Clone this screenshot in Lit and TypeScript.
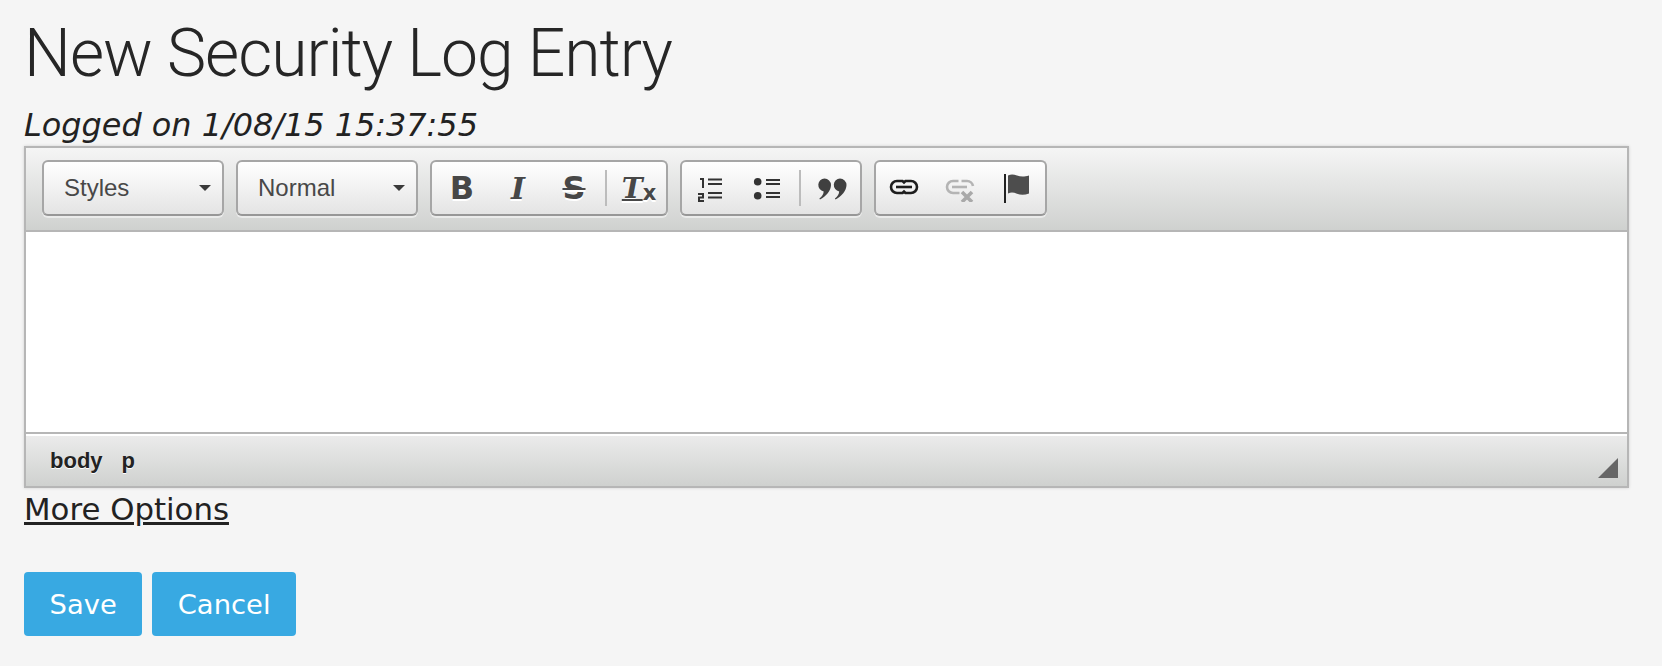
import { LitElement, html, css, svg } from "lit";
import { customElement } from "lit/decorators.js";

const listNum = svg`<svg class="ic nudge2" width="28" height="28" viewBox="0 0 28 28"><g fill="#333"><path d="M4 4h4v10H6V6H4z"/><path d="M2 19h6v5.500H4V26h4v2H2v-5.500h4V21H2z"/><rect x="12" y="4.500" width="14" height="2"/><rect x="12" y="9" width="14" height="2"/><rect x="12" y="18" width="14" height="2"/><rect x="12" y="22.500" width="14" height="2"/></g></svg>`;
const listBul = svg`<svg class="ic nudge1" width="28" height="28" viewBox="0 0 28 28"><g fill="#333"><circle cx="4.700" cy="7.700" r="3.800"/><circle cx="4.700" cy="21.700" r="3.800"/><rect x="13" y="5" width="14" height="2"/><rect x="13" y="9" width="14" height="2"/><rect x="13" y="18" width="14" height="2"/><rect x="13" y="22" width="14" height="2"/></g></svg>`;
const quote = svg`<svg class="ic" width="32" height="28" viewBox="0 0 32 28"><g fill="#404040"><path d="M8.500 4.500a6.500 6.500 0 0 1 6.500 6.500c0 5.500-5 11.500-11 14.500l-.6-1c2.600-2 4.100-4.300 4.300-7.100A6.500 6.500 0 0 1 8.500 4.500z"/><path d="M24 4.500a6.500 6.500 0 0 1 6.500 6.500c0 5.500-5 11.500-11 14.500l-.6-1c2.600-2 4.100-4.300 4.300-7.100A6.500 6.500 0 0 1 24 4.500z"/></g></svg>`;
const link = svg`<svg class="ic" width="30" height="28" viewBox="0 0 30 28"><g fill="none" stroke="#1d1d1d" stroke-width="2.600"><path d="M13.500 7H8a6 6 0 0 0 0 12h5.500l1.500-1.400 1.500 1.400H22a6 6 0 0 0 0-12h-5.500L15 8.400z"/><path d="M7 13h16"/></g></svg>`;
const unlink = svg`<svg class="ic" width="30" height="28" viewBox="0 0 30 28"><g fill="none" stroke="#b4b4b4" stroke-width="2.600"><path d="M13.500 7H8a6 6 0 0 0 0 12h6.500"/><path d="M16.500 7H22a6 6 0 0 1 6 5"/><path d="M7 13h15"/></g><path d="M17 18l10 10M27 18L17 28" stroke="#a9a9a9" stroke-width="3.600" fill="none"/></svg>`;
const flag = svg`<svg class="ic" width="30" height="32" viewBox="0 0 30 32"><rect x="2" y="2" width="2" height="29" fill="#222"/><path d="M6 3.500c3-1.500 5.500-1.300 9 0s7 1.500 12 0v18c-4.500 1.600-8.500 1.500-12 .2s-6-1.500-9-.2z" fill="#4d4d4d"/></svg>`;

@customElement("app-root")
export class AppRoot extends LitElement {
  static styles = css`
    :host { display: block; min-height: 666px; background: #f5f5f5; color: #222; font-family: "DejaVu Sans", sans-serif; padding: 0 33px 0 24px; box-sizing: border-box; }
    h1 { margin: 0; padding-top: 18px; font: 300 66px/72px Roboto, sans-serif; color: #262626; letter-spacing: -1px; white-space: nowrap; }
    .logged { font-size: 31.900px; line-height: 38px; font-style: italic; margin-top: 16px; height: 40px; white-space: nowrap; }
    .editor { border: 2px solid #b6b6b6; box-shadow: 0 0 3px rgba(0,0,0,.15); }
    .toolbar { display: flex; gap: 12px; height: 84px; box-sizing: border-box; padding: 12px 0 0 16px; background: linear-gradient(#f5f5f5, #cfd1cf); border-bottom: 2px solid #b6b6b6; }
    .group { display: flex; align-items: center; height: 56px; box-sizing: border-box; border: 2px solid #a6a6a6; border-bottom-color: #979797; border-radius: 6px; background: linear-gradient(#fff, #e4e4e4); box-shadow: 0 2px 0 rgba(255,255,255,.5); padding-left: 2px; }
    .combo { width: 182px; padding: 0 11px 0 20px; justify-content: space-between; font: 24px "Liberation Sans", sans-serif; color: #484848; }
    .caret { width: 0; height: 0; border: 6px solid transparent; border-top: 6px solid #3a3a3a; border-bottom: 0; }
    .btn { width: 56px; display: flex; align-items: center; justify-content: center; height: 100%; color: #474747; text-shadow: 0 2px 0 #fff; }
    .tight { padding-left: 0; }
    .flag { margin-left: 1px; }
    .nudge2 { margin-left: -4px; }
    .nudge1 { margin-left: -2px; }
    .sep { width: 2px; height: 36px; background: #bcbcbc; margin: 0 3px; }
    .bold { font: 800 32px "DejaVu Sans", sans-serif; }
    .ital { font: italic 700 30px "DejaVu Serif", serif; }
    .strike { font: 700 32px "DejaVu Sans", sans-serif; text-decoration: line-through; text-decoration-thickness: 2px; }
    .clear { display: flex; align-items: flex-end; margin-left: 2px; }
    .clear u { font: italic 700 28px "DejaVu Serif", serif; text-decoration-thickness: 2px; }
    .clear b { font: 700 21px/24px "DejaVu Sans", sans-serif; }
    .content { height: 200px; background: #fff; }
    .status { display: flex; align-items: center; position: relative; height: 54px; box-sizing: border-box; border-top: 2px solid #b6b6b6; padding: 2px 0 0 24px; gap: 19px; background: linear-gradient(#ececec, #cfd1cf); box-shadow: inset 0 2px 0 #fff; font: 700 22px "Liberation Sans", sans-serif; color: #222; text-shadow: 0 1px 0 #fff; }
    .grip { position: absolute; right: 9px; bottom: 8px; width: 0; height: 0; border-style: solid; border-width: 0 0 20px 20px; border-color: transparent transparent #666 transparent; }
    .more { display: block; font-size: 30.800px; line-height: 42px; color: #222; text-decoration: underline; }
    .actions { display: flex; gap: 10px; margin-top: 42px; }
    .cta { height: 64px; padding: 0 25.500px; background: #38a9e2; color: #fff; border: 0; border-radius: 4px; font: 27.400px "DejaVu Sans", sans-serif; }
  `;

  render() {
    return html`
      <h1>New Security Log Entry</h1>
      <div class="logged">Logged on 1/08/15 15:37:55</div>
      <div class="editor">
        <div class="toolbar">
          <div class="group combo"><span>Styles</span><i class="caret"></i></div>
          <div class="group combo"><span>Normal</span><i class="caret"></i></div>
          <div class="group">
            <span class="btn bold">B</span><span class="btn ital">I</span><span class="btn strike">S</span><i class="sep"></i><span class="btn"><span class="clear"><u>T</u><b>x</b></span></span>
          </div>
          <div class="group">
            <span class="btn">${listNum}</span><span class="btn">${listBul}</span><i class="sep"></i><span class="btn">${quote}</span>
          </div>
          <div class="group tight">
            <span class="btn">${link}</span><span class="btn">${unlink}</span><span class="btn flag">${flag}</span>
          </div>
        </div>
        <div class="content"></div>
        <div class="status"><span>body</span><span>p</span><i class="grip"></i></div>
      </div>
      <a class="more">More Options</a>
      <div class="actions"><button class="cta">Save</button><button class="cta">Cancel</button></div>
    `;
  }
}
